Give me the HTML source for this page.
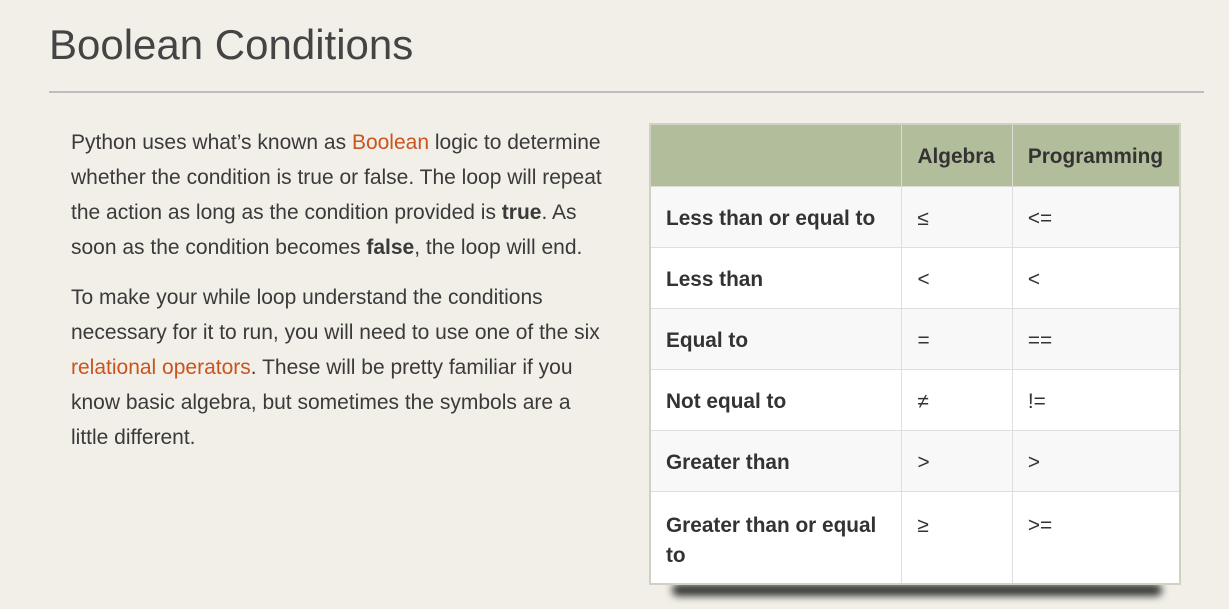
<!DOCTYPE html>
<html><head><style>
body{margin:0;background:#f2efe8;font-family:"Liberation Sans",sans-serif;width:1229px;height:609px;overflow:hidden;position:relative}
h1{position:absolute;left:49px;top:18px;margin:0;font-weight:normal;font-size:42px;color:#444;line-height:54px}
.rule{position:absolute;left:49px;top:91px;width:1155px;height:2px;background:#bdbdbd}
.txt{position:absolute;left:71px;top:125px;width:536px;font-size:21px;line-height:35px;color:#3a3a3a}
.txt p{margin:0 0 15px}
a{color:#c8541f;text-decoration:none}
.shadow{position:absolute;left:672px;top:584px;width:490px;height:12px;background:#333;filter:blur(4px);border-radius:6px}
table{position:absolute;left:649px;top:123px;width:532px;table-layout:fixed;border-collapse:collapse;border:2px solid #cfd1c3;font-size:20.8px;color:#333}
th{background:#b2bd9c;height:62px;font-weight:bold;text-align:left;padding:4px 15px 0;border:1px solid #dcdcd4;box-sizing:border-box}
td{border:1px solid #dedede;height:61px;padding:5px 15px 0;vertical-align:middle;box-sizing:border-box}
td:first-child{font-weight:bold}
tr:nth-child(odd) td{background:#f8f8f8}
tr:nth-child(even) td{background:#fff}
.last td{height:93px;vertical-align:top;padding-top:19px;line-height:30px;padding-bottom:0}
</style></head><body>
<h1>Boolean Conditions</h1>
<div class="rule"></div>
<div class="txt">
<p>Python uses what’s known as <a>Boolean</a> logic to determine whether the condition is true or false. The loop will repeat the action as long as the condition provided is <b>true</b>. As soon as the condition becomes <b>false</b>, the loop will end.</p>
<p>To make your while loop understand the conditions necessary for it to run, you will need to use one of the six <a>relational operators</a>. These will be pretty familiar if you know basic algebra, but sometimes the symbols are a little different.</p>
</div>
<div class="shadow"></div>
<table>
<colgroup><col style="width:251px"><col style="width:110px"><col style="width:167px"></colgroup>
<thead><tr><th></th><th>Algebra</th><th>Programming</th></tr></thead>
<tbody>
<tr><td>Less than or equal to</td><td>≤</td><td>&lt;=</td></tr>
<tr><td>Less than</td><td>&lt;</td><td>&lt;</td></tr>
<tr><td>Equal to</td><td>=</td><td>==</td></tr>
<tr><td>Not equal to</td><td>≠</td><td>!=</td></tr>
<tr><td>Greater than</td><td>&gt;</td><td>&gt;</td></tr>
<tr class="last"><td>Greater than or equal to</td><td>≥</td><td>&gt;=</td></tr>
</tbody></table>
</body></html>
